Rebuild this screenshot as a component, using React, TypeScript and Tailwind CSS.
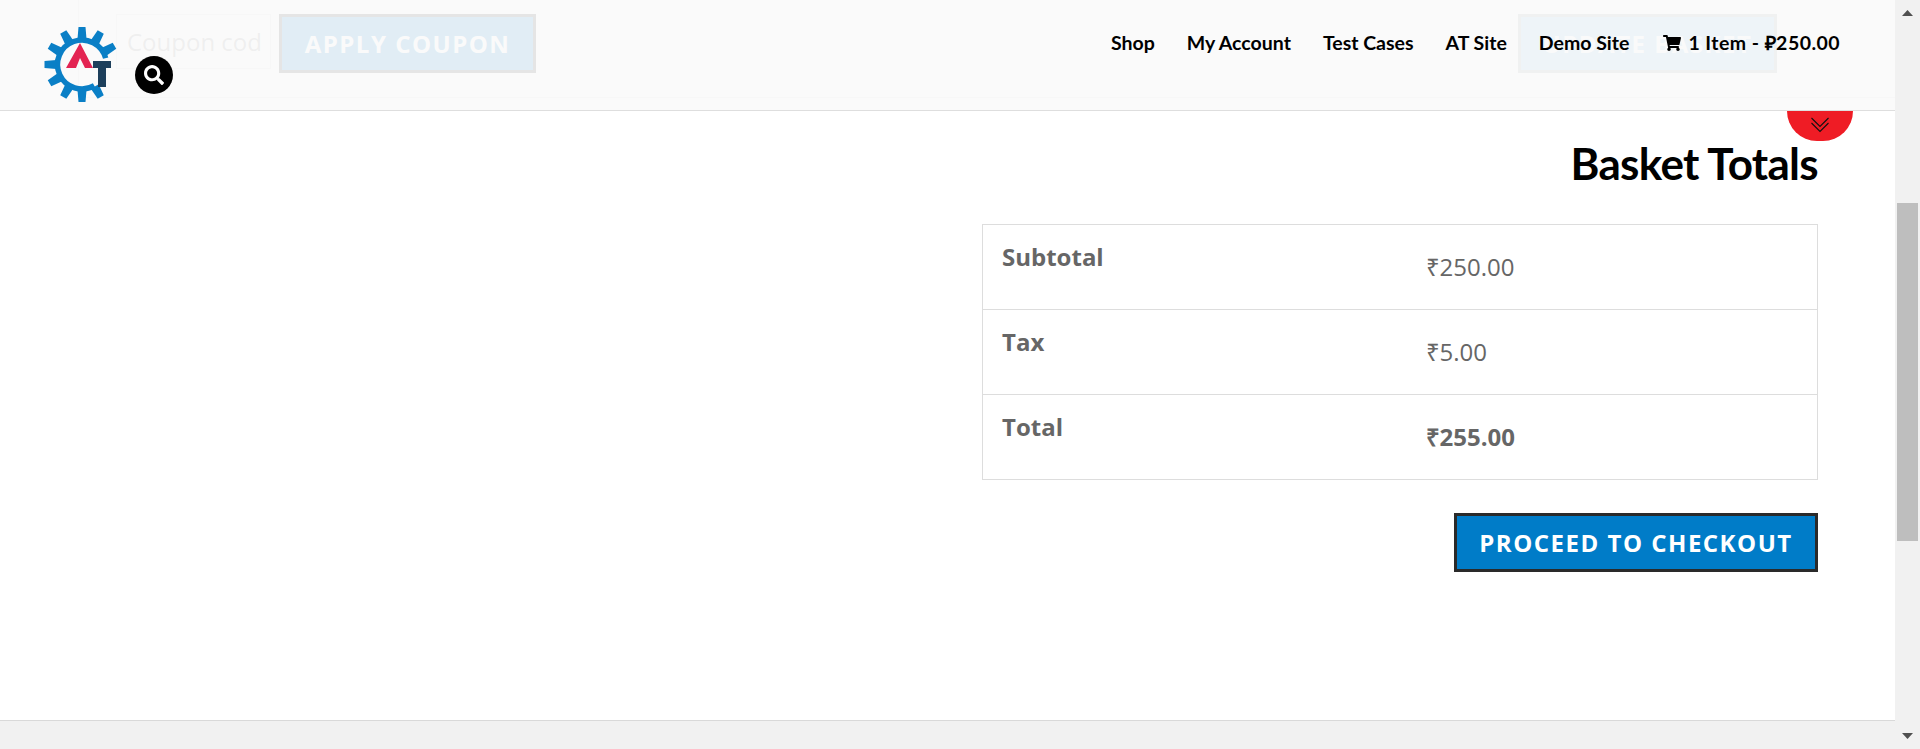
import { FaSearch, FaShoppingCart } from "react-icons/fa";

const navLinks = ["Shop", "My Account", "Test Cases", "AT Site", "Demo Site"];
const teeth = [0, 30, 60, 150, 180, 210, 240, 270, 300, 330];

function Logo() {
  return (
    <svg viewBox="0 0 78 78" className="w-[78px] h-[78px] shrink-0">
      {/* gear */}
      <path d="M51.25 59.72 A24.5 24.5 0 1 1 62.66 32.16" fill="none" stroke="#0a7fc6" strokeWidth="5.5" />
      {teeth.map((deg) => (
        <polygon key={deg} points="35.5,1 42.5,1 43.5,13 34.5,13" fill="#0a7fc6" transform={`rotate(${deg} 39 38.5)`} />
      ))}
      {/* A */}
      <polygon points="37,17 50,42 42,42 37,32 33,42 23,42" fill="#e32452" />
      {/* T */}
      <path d="M50 35 H68 V42 H63 V61 H55 V42 H50 Z" fill="#1d3f5b" />
    </svg>
  );
}

function Header() {
  return (
    <header className="absolute top-0 left-0 right-0 h-[111px] bg-[#f9f9f9]/90 border-b border-[#dedede] flex items-start">
      <div className="ml-[43px] mt-[26px]">
        <Logo />
      </div>
      <button className="ml-[14px] mt-[56px] w-[38px] h-[38px] rounded-full bg-black text-white flex items-center justify-center">
        <FaSearch className="text-[20px]" />
      </button>
      <nav className="ml-auto mr-[55px] mt-[30px] flex items-center text-black text-[19.5px] font-bold font-['Lato',sans-serif] leading-[26px]">
        {navLinks.map((l) => (
          <a key={l} className="mr-[32px]">{l}</a>
        ))}
        <a className="ml-[2px] flex items-center tracking-[0.45px]">
          <FaShoppingCart className="text-[18px] mr-[7px]" />
          1 Item - ₽250.00
        </a>
      </nav>
    </header>
  );
}

function CouponRow() {
  return (
    <div className="ml-[78px] h-[98px] border-l border-b border-[#dddddd] pl-[37px] pt-[14px] flex items-start font-['Open_Sans',sans-serif]">
      <input
        readOnly
        placeholder="Coupon code"
        className="w-[155px] h-[55px] border border-[#dddddd] pl-[10px] pr-[9px] text-[24px] placeholder:text-[#8c8c8c] outline-none"
      />
      <button className="ml-[8px] w-[257px] h-[59px] border-[3px] border-[#2a2a2a] bg-[#007cc8] text-white font-bold text-[24px] tracking-[1.5px]">
        APPLY COUPON
      </button>
      <button className="ml-auto mr-[118px] w-[259px] h-[59px] border-[3px] border-[#959ea3] bg-[#80bde3] text-white font-bold text-[24px] tracking-[1.5px]">
        UPDATE BASKET
      </button>
    </div>
  );
}

function Totals() {
  const rows = [
    { label: "Subtotal", value: "₹250.00", bold: false },
    { label: "Tax", value: "₹5.00", bold: false },
    { label: "Total", value: "₹255.00", bold: true },
  ];
  return (
    <div className="ml-auto mr-[77px] w-[836px] flex flex-col font-['Open_Sans',sans-serif]">
      <h2 className="mt-[40px] h-[86px] text-right text-black text-[44px] leading-[50px] tracking-[-0.7px] font-bold font-['Lato',sans-serif]">
        Basket Totals
      </h2>
      <table className="w-full border-collapse border border-[#dddddd] text-[#666666] text-[24px]">
        <tbody>
          {rows.map((r) => (
            <tr key={r.label} className="h-[85px] border-b border-[#dddddd]">
              <th className="w-[425px] text-left align-top pl-[19px] pt-[16px] font-bold leading-[32px]">{r.label}</th>
              <td className={`pl-[18px] leading-[32px] ${r.bold ? "font-bold" : ""}`}>{r.value}</td>
            </tr>
          ))}
        </tbody>
      </table>
      <button className="self-end mt-[33px] w-[364px] h-[59px] border-[3px] border-[#2a2a2a] bg-[#007cc8] text-white font-bold text-[24px] tracking-[1.5px]">
        PROCEED TO CHECKOUT
      </button>
    </div>
  );
}

function Scrollbar() {
  return (
    <div className="w-[25px] h-full bg-[#f1f1f1] flex flex-col items-center shrink-0">
      <svg viewBox="0 0 11 6" className="w-[11px] h-[6px] mt-[10px]">
        <polygon points="5.5,0 11,6 0,6" fill="#505050" />
      </svg>
      <div className="w-[21px] h-[338px] mt-[187px] bg-[#bebebe]" />
      <svg viewBox="0 0 11 6" className="w-[11px] h-[6px] mt-auto mb-[10px]">
        <polygon points="0,0 11,0 5.5,6" fill="#505050" />
      </svg>
    </div>
  );
}

export default function App() {
  return (
    <div className="w-[1920px] h-[749px] flex overflow-hidden bg-white">
      <div className="relative flex-1 h-full flex flex-col">
        <CouponRow />
        <Totals />
        <div className="mt-auto h-[29px] bg-[#f1f1f1] border-t border-[#d9d9d9]" />
        <Header />
        {/* back to top tab, hanging from the header */}
        <div className="absolute top-[111px] left-[1787px] w-[66px] h-[30px] rounded-b-[33px] bg-[#ef1c25] flex items-start justify-center">
          <svg viewBox="0 0 20 16" className="w-[20px] h-[16px] mt-[6px]" fill="none" stroke="#111" strokeWidth="1.1">
            <path d="M1.5 1 L10 9.5 L18.5 1" />
            <path d="M1.5 6 L10 14.5 L18.5 6" />
          </svg>
        </div>
      </div>
      <Scrollbar />
    </div>
  );
}
